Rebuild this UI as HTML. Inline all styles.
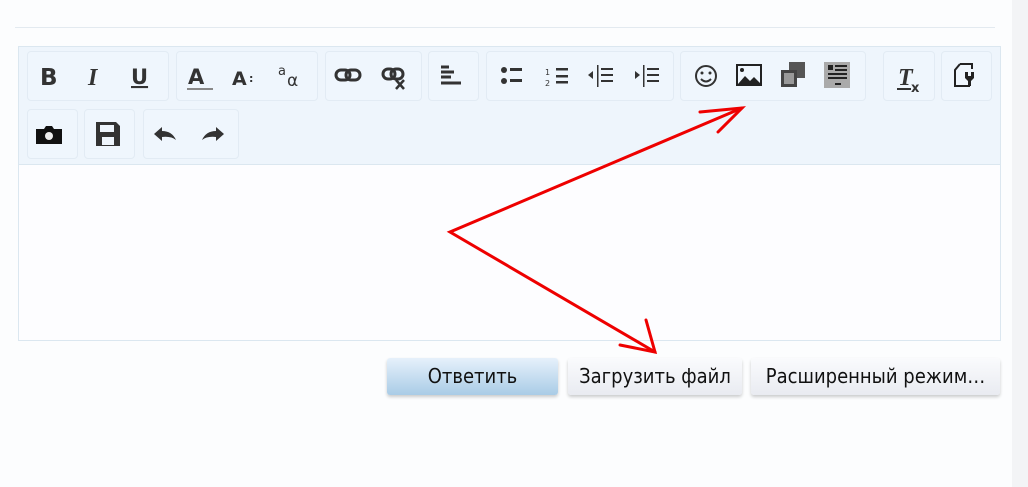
<!DOCTYPE html>
<html><head><meta charset="utf-8"><style>
body{margin:0;width:1028px;height:487px;background:#fcfdfe;position:relative;overflow:hidden;font-family:"DejaVu Sans","Liberation Sans",sans-serif}
.strip{position:absolute;left:1012px;top:0;width:16px;height:487px;background:#f3f4f6}
.hr{position:absolute;left:15px;top:27px;width:980px;height:1px;background:#e3eaf0}
.ed{position:absolute;left:18px;top:46px;width:981px;height:293px;border:1px solid #dbe7f0;background:#fdfdff}
.tb{position:absolute;left:0;top:0;width:981px;height:117px;background:#eef5fc;border-bottom:1px solid #dbe7f0}
.g{position:absolute;border:1px solid #e2ebf4;border-radius:4px;background:#eff6fd}
.btn{position:absolute;top:358px;height:37px;border-radius:3px;font-size:20px;line-height:37px;text-align:center;color:#111;box-shadow:0 2px 3px rgba(0,0,0,.2);background:linear-gradient(#fafbfd,#e9ebf1);font-family:"DejaVu Sans Condensed","DejaVu Sans",sans-serif;white-space:nowrap}
</style></head><body>
<div class="strip"></div>
<div class="hr"></div>
<div class="ed"><div class="tb">
<div class="g" style="left:8px;top:4px;width:140px;height:48px"></div>
<div class="g" style="left:157px;top:4px;width:140px;height:48px"></div>
<div class="g" style="left:306px;top:4px;width:95px;height:48px"></div>
<div class="g" style="left:409px;top:4px;width:49px;height:48px"></div>
<div class="g" style="left:467px;top:4px;width:186px;height:48px"></div>
<div class="g" style="left:661px;top:4px;width:184px;height:48px"></div>
<div class="g" style="left:864px;top:4px;width:50px;height:48px"></div>
<div class="g" style="left:922px;top:4px;width:49px;height:48px"></div>
<div class="g" style="left:8px;top:62px;width:49px;height:48px"></div>
<div class="g" style="left:65px;top:62px;width:49px;height:48px"></div>
<div class="g" style="left:124px;top:62px;width:94px;height:48px"></div>
</div></div>
<svg style="position:absolute;left:0;top:0" width="1028" height="487">
<g font-family="DejaVu Sans,Liberation Sans,sans-serif" font-weight="bold" fill="#333">
<text x="40" y="85" font-size="23">B</text>
<text x="88" y="85" font-size="24" font-style="italic" font-family="Liberation Serif">I</text>
<text x="131" y="84" font-size="21" text-decoration="underline">U</text>
<text x="188" y="84" font-size="21">A</text><rect x="187" y="88" width="26" height="2" fill="#888"/>
<text x="232" y="85" font-size="19">A</text><text x="249" y="82" font-size="11">:</text>
<text x="278" y="75" font-size="13" font-weight="normal">a</text><text x="287" y="86" font-size="17" font-weight="normal">α</text>
</g>
<g stroke="#333" stroke-width="3" fill="none">
<rect x="336" y="70" width="14" height="10" rx="5"/><rect x="346" y="70" width="14" height="10" rx="5"/>
<rect x="383" y="69" width="12" height="10" rx="5"/><rect x="391" y="69" width="12" height="10" rx="5"/>
<path d="M396 80l8 9M404 80l-8 9" stroke-width="2.5"/>
<path d="M441 67h8M441 72h13M441 77h10M441 83h20"/>
</g>
<g fill="#333">
<circle cx="504" cy="70" r="3"/><circle cx="504" cy="81" r="3"/><rect x="510" y="68" width="12" height="3"/><rect x="510" y="79" width="12" height="3"/>
<rect x="556" y="68" width="12" height="2.5"/><rect x="556" y="75" width="12" height="2.5"/><rect x="556" y="81" width="12" height="2.5"/>
<text x="545" y="75" font-size="8">1</text><text x="545" y="86" font-size="8">2</text>
<rect x="597" y="65" width="1.5" height="22"/><rect x="601" y="68" width="12" height="2"/><rect x="601" y="74" width="12" height="2"/><rect x="601" y="80" width="12" height="2"/><path d="M588 75l5-4v8z"/>
<rect x="643" y="65" width="1.5" height="22"/><rect x="647" y="68" width="12" height="2"/><rect x="647" y="74" width="12" height="2"/><rect x="647" y="80" width="12" height="2"/><path d="M640 75l-5-4v8z"/>
</g>
<circle cx="706" cy="76" r="10" fill="none" stroke="#333" stroke-width="2"/>
<circle cx="702" cy="73" r="1.5" fill="#333"/><circle cx="710" cy="73" r="1.5" fill="#333"/><path d="M701 79q5 5 10 0" stroke="#333" stroke-width="2" fill="none"/>
<rect x="737" y="65" width="24" height="20" fill="none" stroke="#222" stroke-width="2"/><circle cx="742" cy="70" r="2" fill="#222"/><path d="M738 84l7-8 5 5 4-4 7 7z" fill="#222"/>
<rect x="789" y="62" width="16" height="16" fill="#555"/><rect x="781" y="70" width="16" height="17" fill="#444"/><rect x="784" y="73" width="10" height="11" fill="#999"/>
<rect x="824" y="62" width="26" height="26" fill="#aaa"/><g fill="#222"><rect x="828" y="65" width="5" height="5"/><rect x="835" y="65" width="12" height="2"/><rect x="835" y="69" width="12" height="2"/><rect x="828" y="73" width="19" height="2"/><rect x="828" y="77" width="19" height="2"/><rect x="835" y="83" width="6" height="2"/></g>
<text x="898" y="85" font-size="24" font-weight="bold" font-style="italic" fill="#333" font-family="Liberation Serif">T</text><rect x="897" y="88" width="14" height="2" fill="#333"/><text x="911" y="92" font-size="13" font-weight="bold" fill="#333">x</text>
<path d="M960 64h12v5M960 64l-5 6v16h15" fill="none" stroke="#222" stroke-width="2"/><path d="M965 72v6l3 3v5h3v-5l3-3v-6h-3v4h-3v-4z" fill="#222"/>
<path d="M36 129h8l2-3h6l2 3h8v15h-26z" fill="#111"/><circle cx="49" cy="136" r="4" fill="#eee"/>
<path d="M96 122h20l4 4v20h-24z" fill="#333"/><rect x="100" y="125" width="14" height="7" fill="#eef5fc"/><rect x="102" y="137" width="12" height="8" fill="#eef5fc"/>
<path d="M154 134l8-7v4q10 0 14 9q-5-4-14-3v4z" fill="#333"/>
<path d="M224 134l-8-7v4q-10 0-14 9q5-4 14-3v4z" fill="#333"/>
<g stroke="#e00" stroke-width="3" fill="none" stroke-linecap="round">
<path d="M742 108L450 232L655 352"/><path d="M700 112L742 108L718 132"/><path d="M620 345L655 352L646 320"/>
</g>
</svg>
<div class="btn" style="left:387px;width:171px;background:linear-gradient(#e6f1fb,#a9cce6)">Ответить</div>
<div class="btn" style="left:568px;width:174px">Загрузить файл</div>
<div class="btn" style="left:751px;width:249px">Расширенный режим…</div>
</body></html>
